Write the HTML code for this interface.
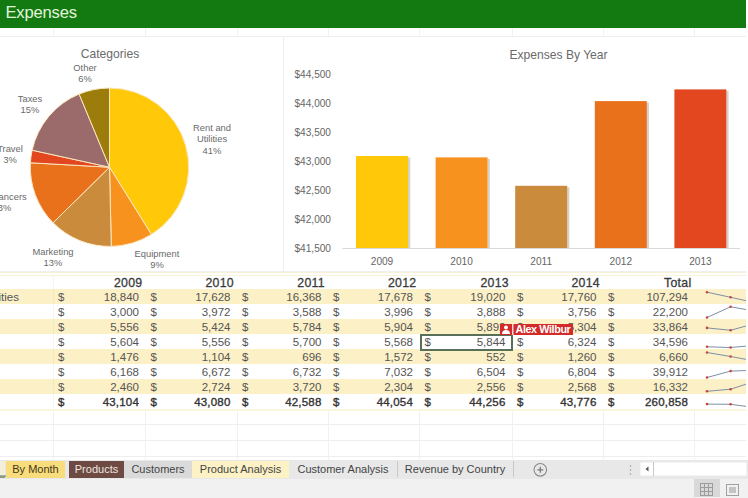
<!DOCTYPE html>
<html><head><meta charset="utf-8">
<style>
*{margin:0;padding:0;box-sizing:border-box}
html,body{width:748px;height:498px;overflow:hidden;background:#fff;font-family:"Liberation Sans",sans-serif}
#root{position:absolute;left:0;top:0;width:748px;height:498px;overflow:hidden}
#hdr{position:absolute;left:0;top:0;width:746px;height:27.5px;background:#127a10}
#hdr span{position:absolute;left:5.5px;top:2.8px;font-size:16.6px;color:#e2f4dc;letter-spacing:-0.2px}
.vl{position:absolute;top:27px;height:433px;width:1px;background:#f1f1f1}
.hl{position:absolute;left:0;width:746px;height:1px;background:#eeeeee}
#pie{position:absolute;left:-2px;top:37px;width:285.5px;height:235px;background:#fff;border-right:1.5px solid #eeeeee;border-bottom:1px solid #efefef}
#bar{position:absolute;left:283.5px;top:37px;width:462.5px;height:235px;background:#fff;border-bottom:1px solid #efefef}
svg text{font-family:"Liberation Sans",sans-serif}
.lb{font-size:9.4px;fill:#6a6a6a}
.ttl{font-size:12.1px;fill:#6a6a6a}
.ax{font-size:10.1px;fill:#666}
.band{position:absolute;left:0;width:746px;height:4px;background:#fbf5dc}
.rb{position:absolute;left:0;width:746px;background:#fcf0c6}
.hd{position:absolute;height:14px;line-height:14px;margin-top:0.5px;font-size:12.3px;font-weight:normal;-webkit-text-stroke:0.3px #3a3a3a;color:#3a3a3a;text-align:right;letter-spacing:0.3px}
.ct{position:absolute;left:-68px;width:110px;height:15px;line-height:15px;margin-top:1.5px;font-size:11.5px;color:#555;white-space:nowrap}
.dl{position:absolute;height:15px;line-height:15px;margin-top:1.5px;font-size:11.5px;color:#555}
.nm{position:absolute;height:15px;line-height:15px;margin-top:1.5px;font-size:11.5px;color:#555;text-align:right}
.b{font-weight:normal;-webkit-text-stroke:0.35px #333;color:#333;letter-spacing:0.2px}
#tabs{position:absolute;left:0;top:460px;width:748px;height:19px;background:#e8e8e8}
.tab{position:absolute;top:1px;height:17px;line-height:17px;font-size:11px;color:#444;text-align:center;white-space:nowrap}
#status{position:absolute;left:0;top:479px;width:748px;height:19px;background:#f1f1f1}
</style></head><body><div id="root">
<div class="vl" style="left:52.5px"></div><div class="vl" style="left:145px"></div><div class="vl" style="left:236.5px"></div><div class="vl" style="left:327.5px"></div><div class="vl" style="left:419px"></div><div class="vl" style="left:511.5px"></div><div class="vl" style="left:602.5px"></div><div class="vl" style="left:694px"></div>
<div class="hl" style="top:36px"></div>
<div class="hl" style="top:424px"></div>
<div class="hl" style="top:440px"></div>
<div class="hl" style="top:456px"></div>
<div id="hdr"><span>Expenses</span></div>
<div style="position:absolute;left:0;top:271px;width:746px;height:137.5px;background:#fff"></div>
<div class="band" style="top:272px;height:1px;background:#f8f2da"></div><div class="band" style="top:274.5px;height:1px;background:#f8f2da"></div>
<div class="band" style="top:408.5px;height:2px"></div>

<div class="rb" style="top:288.5px;height:15px"></div>
<div class="rb" style="top:318.5px;height:15px"></div>
<div class="rb" style="top:348.5px;height:15px"></div>
<div class="rb" style="top:378.5px;height:15px"></div>
<div class="hd" style="left:52.5px;top:275.5px;width:90.0px">2009</div>
<div class="hd" style="left:145px;top:275.5px;width:89.0px">2010</div>
<div class="hd" style="left:236.5px;top:275.5px;width:88.5px">2011</div>
<div class="hd" style="left:327.5px;top:275.5px;width:89.0px">2012</div>
<div class="hd" style="left:419px;top:275.5px;width:90.0px">2013</div>
<div class="hd" style="left:511.5px;top:275.5px;width:88.5px">2014</div>
<div class="hd" style="left:602.5px;top:275.5px;width:89.0px">Total</div>
<div class="ct" style="top:288.5px">Rent and Utilities</div>
<div class="dl" style="left:58.0px;top:288.5px">$</div>
<div class="nm" style="left:52.5px;top:288.5px;width:86.5px">18,840</div>
<div class="dl" style="left:150.5px;top:288.5px">$</div>
<div class="nm" style="left:145px;top:288.5px;width:85.5px">17,628</div>
<div class="dl" style="left:242.0px;top:288.5px">$</div>
<div class="nm" style="left:236.5px;top:288.5px;width:85.0px">16,368</div>
<div class="dl" style="left:333.0px;top:288.5px">$</div>
<div class="nm" style="left:327.5px;top:288.5px;width:85.5px">17,678</div>
<div class="dl" style="left:424.5px;top:288.5px">$</div>
<div class="nm" style="left:419px;top:288.5px;width:86.5px">19,020</div>
<div class="dl" style="left:517.0px;top:288.5px">$</div>
<div class="nm" style="left:511.5px;top:288.5px;width:85.0px">17,760</div>
<div class="dl" style="left:608.0px;top:288.5px">$</div>
<div class="nm" style="left:602.5px;top:288.5px;width:85.5px">107,294</div>
<div class="ct" style="top:303.5px">Equipment</div>
<div class="dl" style="left:58.0px;top:303.5px">$</div>
<div class="nm" style="left:52.5px;top:303.5px;width:86.5px">3,000</div>
<div class="dl" style="left:150.5px;top:303.5px">$</div>
<div class="nm" style="left:145px;top:303.5px;width:85.5px">3,972</div>
<div class="dl" style="left:242.0px;top:303.5px">$</div>
<div class="nm" style="left:236.5px;top:303.5px;width:85.0px">3,588</div>
<div class="dl" style="left:333.0px;top:303.5px">$</div>
<div class="nm" style="left:327.5px;top:303.5px;width:85.5px">3,996</div>
<div class="dl" style="left:424.5px;top:303.5px">$</div>
<div class="nm" style="left:419px;top:303.5px;width:86.5px">3,888</div>
<div class="dl" style="left:517.0px;top:303.5px">$</div>
<div class="nm" style="left:511.5px;top:303.5px;width:85.0px">3,756</div>
<div class="dl" style="left:608.0px;top:303.5px">$</div>
<div class="nm" style="left:602.5px;top:303.5px;width:85.5px">22,200</div>
<div class="ct" style="top:318.5px">Marketing</div>
<div class="dl" style="left:58.0px;top:318.5px">$</div>
<div class="nm" style="left:52.5px;top:318.5px;width:86.5px">5,556</div>
<div class="dl" style="left:150.5px;top:318.5px">$</div>
<div class="nm" style="left:145px;top:318.5px;width:85.5px">5,424</div>
<div class="dl" style="left:242.0px;top:318.5px">$</div>
<div class="nm" style="left:236.5px;top:318.5px;width:85.0px">5,784</div>
<div class="dl" style="left:333.0px;top:318.5px">$</div>
<div class="nm" style="left:327.5px;top:318.5px;width:85.5px">5,904</div>
<div class="dl" style="left:424.5px;top:318.5px">$</div>
<div class="nm" style="left:419px;top:318.5px;width:86.5px">5,892</div>
<div class="dl" style="left:517.0px;top:318.5px">$</div>
<div class="nm" style="left:511.5px;top:318.5px;width:85.0px">5,304</div>
<div class="dl" style="left:608.0px;top:318.5px">$</div>
<div class="nm" style="left:602.5px;top:318.5px;width:85.5px">33,864</div>
<div class="ct" style="top:333.5px">Freelancers</div>
<div class="dl" style="left:58.0px;top:333.5px">$</div>
<div class="nm" style="left:52.5px;top:333.5px;width:86.5px">5,604</div>
<div class="dl" style="left:150.5px;top:333.5px">$</div>
<div class="nm" style="left:145px;top:333.5px;width:85.5px">5,556</div>
<div class="dl" style="left:242.0px;top:333.5px">$</div>
<div class="nm" style="left:236.5px;top:333.5px;width:85.0px">5,700</div>
<div class="dl" style="left:333.0px;top:333.5px">$</div>
<div class="nm" style="left:327.5px;top:333.5px;width:85.5px">5,568</div>
<div class="dl" style="left:424.5px;top:333.5px">$</div>
<div class="nm" style="left:419px;top:333.5px;width:86.5px">5,844</div>
<div class="dl" style="left:517.0px;top:333.5px">$</div>
<div class="nm" style="left:511.5px;top:333.5px;width:85.0px">6,324</div>
<div class="dl" style="left:608.0px;top:333.5px">$</div>
<div class="nm" style="left:602.5px;top:333.5px;width:85.5px">34,596</div>
<div class="ct" style="top:348.5px">Travel</div>
<div class="dl" style="left:58.0px;top:348.5px">$</div>
<div class="nm" style="left:52.5px;top:348.5px;width:86.5px">1,476</div>
<div class="dl" style="left:150.5px;top:348.5px">$</div>
<div class="nm" style="left:145px;top:348.5px;width:85.5px">1,104</div>
<div class="dl" style="left:242.0px;top:348.5px">$</div>
<div class="nm" style="left:236.5px;top:348.5px;width:85.0px">696</div>
<div class="dl" style="left:333.0px;top:348.5px">$</div>
<div class="nm" style="left:327.5px;top:348.5px;width:85.5px">1,572</div>
<div class="dl" style="left:424.5px;top:348.5px">$</div>
<div class="nm" style="left:419px;top:348.5px;width:86.5px">552</div>
<div class="dl" style="left:517.0px;top:348.5px">$</div>
<div class="nm" style="left:511.5px;top:348.5px;width:85.0px">1,260</div>
<div class="dl" style="left:608.0px;top:348.5px">$</div>
<div class="nm" style="left:602.5px;top:348.5px;width:85.5px">6,660</div>
<div class="ct" style="top:363.5px">Taxes</div>
<div class="dl" style="left:58.0px;top:363.5px">$</div>
<div class="nm" style="left:52.5px;top:363.5px;width:86.5px">6,168</div>
<div class="dl" style="left:150.5px;top:363.5px">$</div>
<div class="nm" style="left:145px;top:363.5px;width:85.5px">6,672</div>
<div class="dl" style="left:242.0px;top:363.5px">$</div>
<div class="nm" style="left:236.5px;top:363.5px;width:85.0px">6,732</div>
<div class="dl" style="left:333.0px;top:363.5px">$</div>
<div class="nm" style="left:327.5px;top:363.5px;width:85.5px">7,032</div>
<div class="dl" style="left:424.5px;top:363.5px">$</div>
<div class="nm" style="left:419px;top:363.5px;width:86.5px">6,504</div>
<div class="dl" style="left:517.0px;top:363.5px">$</div>
<div class="nm" style="left:511.5px;top:363.5px;width:85.0px">6,804</div>
<div class="dl" style="left:608.0px;top:363.5px">$</div>
<div class="nm" style="left:602.5px;top:363.5px;width:85.5px">39,912</div>
<div class="ct" style="top:378.5px">Other</div>
<div class="dl" style="left:58.0px;top:378.5px">$</div>
<div class="nm" style="left:52.5px;top:378.5px;width:86.5px">2,460</div>
<div class="dl" style="left:150.5px;top:378.5px">$</div>
<div class="nm" style="left:145px;top:378.5px;width:85.5px">2,724</div>
<div class="dl" style="left:242.0px;top:378.5px">$</div>
<div class="nm" style="left:236.5px;top:378.5px;width:85.0px">3,720</div>
<div class="dl" style="left:333.0px;top:378.5px">$</div>
<div class="nm" style="left:327.5px;top:378.5px;width:85.5px">2,304</div>
<div class="dl" style="left:424.5px;top:378.5px">$</div>
<div class="nm" style="left:419px;top:378.5px;width:86.5px">2,556</div>
<div class="dl" style="left:517.0px;top:378.5px">$</div>
<div class="nm" style="left:511.5px;top:378.5px;width:85.0px">2,568</div>
<div class="dl" style="left:608.0px;top:378.5px">$</div>
<div class="nm" style="left:602.5px;top:378.5px;width:85.5px">16,332</div>
<div class="dl b" style="left:58.0px;top:393.5px">$</div>
<div class="nm b" style="left:52.5px;top:393.5px;width:86.5px">43,104</div>
<div class="dl b" style="left:150.5px;top:393.5px">$</div>
<div class="nm b" style="left:145px;top:393.5px;width:85.5px">43,080</div>
<div class="dl b" style="left:242.0px;top:393.5px">$</div>
<div class="nm b" style="left:236.5px;top:393.5px;width:85.0px">42,588</div>
<div class="dl b" style="left:333.0px;top:393.5px">$</div>
<div class="nm b" style="left:327.5px;top:393.5px;width:85.5px">44,054</div>
<div class="dl b" style="left:424.5px;top:393.5px">$</div>
<div class="nm b" style="left:419px;top:393.5px;width:86.5px">44,256</div>
<div class="dl b" style="left:517.0px;top:393.5px">$</div>
<div class="nm b" style="left:511.5px;top:393.5px;width:85.0px">43,776</div>
<div class="dl b" style="left:608.0px;top:393.5px">$</div>
<div class="nm b" style="left:602.5px;top:393.5px;width:85.5px">260,858</div>
<div style="position:absolute;left:52.5px;top:276px;width:1px;height:132px;background:rgba(200,200,190,0.18)"></div>
<svg style="position:absolute;left:0;top:0" width="746" height="498">
<defs><filter id="sh"><feGaussianBlur stdDeviation="1"/></filter></defs>
<path d="M707.0,292.2 L730.6,297.3 L754.2,302.5 L777.8,297.1 L801.4,291.5 L825.0,296.7" fill="none" stroke="#7d8fa6" stroke-width="1"/>
<circle cx="707.0" cy="292.2" r="1.3" fill="#c9463f"/>
<circle cx="730.6" cy="297.3" r="1.3" fill="#c9463f"/>
<circle cx="754.2" cy="302.5" r="1.3" fill="#c9463f"/>
<circle cx="777.8" cy="297.1" r="1.3" fill="#c9463f"/>
<circle cx="801.4" cy="291.5" r="1.3" fill="#c9463f"/>
<circle cx="825.0" cy="296.7" r="1.3" fill="#c9463f"/>
<path d="M707.0,317.5 L730.6,306.8 L754.2,311.0 L777.8,306.5 L801.4,307.7 L825.0,309.2" fill="none" stroke="#7d8fa6" stroke-width="1"/>
<circle cx="707.0" cy="317.5" r="1.3" fill="#c9463f"/>
<circle cx="730.6" cy="306.8" r="1.3" fill="#c9463f"/>
<circle cx="754.2" cy="311.0" r="1.3" fill="#c9463f"/>
<circle cx="777.8" cy="306.5" r="1.3" fill="#c9463f"/>
<circle cx="801.4" cy="307.7" r="1.3" fill="#c9463f"/>
<circle cx="825.0" cy="309.2" r="1.3" fill="#c9463f"/>
<path d="M707.0,327.9 L730.6,330.3 L754.2,323.7 L777.8,321.5 L801.4,321.7 L825.0,332.5" fill="none" stroke="#7d8fa6" stroke-width="1"/>
<circle cx="707.0" cy="327.9" r="1.3" fill="#c9463f"/>
<circle cx="730.6" cy="330.3" r="1.3" fill="#c9463f"/>
<circle cx="754.2" cy="323.7" r="1.3" fill="#c9463f"/>
<circle cx="777.8" cy="321.5" r="1.3" fill="#c9463f"/>
<circle cx="801.4" cy="321.7" r="1.3" fill="#c9463f"/>
<circle cx="825.0" cy="332.5" r="1.3" fill="#c9463f"/>
<path d="M707.0,346.8 L730.6,347.5 L754.2,345.4 L777.8,347.3 L801.4,343.4 L825.0,336.5" fill="none" stroke="#7d8fa6" stroke-width="1"/>
<circle cx="707.0" cy="346.8" r="1.3" fill="#c9463f"/>
<circle cx="730.6" cy="347.5" r="1.3" fill="#c9463f"/>
<circle cx="754.2" cy="345.4" r="1.3" fill="#c9463f"/>
<circle cx="777.8" cy="347.3" r="1.3" fill="#c9463f"/>
<circle cx="801.4" cy="343.4" r="1.3" fill="#c9463f"/>
<circle cx="825.0" cy="336.5" r="1.3" fill="#c9463f"/>
<path d="M707.0,352.5 L730.6,356.5 L754.2,360.9 L777.8,351.5 L801.4,362.5 L825.0,354.9" fill="none" stroke="#7d8fa6" stroke-width="1"/>
<circle cx="707.0" cy="352.5" r="1.3" fill="#c9463f"/>
<circle cx="730.6" cy="356.5" r="1.3" fill="#c9463f"/>
<circle cx="754.2" cy="360.9" r="1.3" fill="#c9463f"/>
<circle cx="777.8" cy="351.5" r="1.3" fill="#c9463f"/>
<circle cx="801.4" cy="362.5" r="1.3" fill="#c9463f"/>
<circle cx="825.0" cy="354.9" r="1.3" fill="#c9463f"/>
<path d="M707.0,377.5 L730.6,371.1 L754.2,370.3 L777.8,366.5 L801.4,373.2 L825.0,369.4" fill="none" stroke="#7d8fa6" stroke-width="1"/>
<circle cx="707.0" cy="377.5" r="1.3" fill="#c9463f"/>
<circle cx="730.6" cy="371.1" r="1.3" fill="#c9463f"/>
<circle cx="754.2" cy="370.3" r="1.3" fill="#c9463f"/>
<circle cx="777.8" cy="366.5" r="1.3" fill="#c9463f"/>
<circle cx="801.4" cy="373.2" r="1.3" fill="#c9463f"/>
<circle cx="825.0" cy="369.4" r="1.3" fill="#c9463f"/>
<path d="M707.0,391.3 L730.6,389.2 L754.2,381.5 L777.8,392.5 L801.4,390.5 L825.0,390.4" fill="none" stroke="#7d8fa6" stroke-width="1"/>
<circle cx="707.0" cy="391.3" r="1.3" fill="#c9463f"/>
<circle cx="730.6" cy="389.2" r="1.3" fill="#c9463f"/>
<circle cx="754.2" cy="381.5" r="1.3" fill="#c9463f"/>
<circle cx="777.8" cy="392.5" r="1.3" fill="#c9463f"/>
<circle cx="801.4" cy="390.5" r="1.3" fill="#c9463f"/>
<circle cx="825.0" cy="390.4" r="1.3" fill="#c9463f"/>
<path d="M707.0,404.1 L730.6,404.3 L754.2,407.5 L777.8,397.8 L801.4,396.5 L825.0,399.7" fill="none" stroke="#7d8fa6" stroke-width="1"/>
<circle cx="707.0" cy="404.1" r="1.3" fill="#c9463f"/>
<circle cx="730.6" cy="404.3" r="1.3" fill="#c9463f"/>
<circle cx="754.2" cy="407.5" r="1.3" fill="#c9463f"/>
<circle cx="777.8" cy="397.8" r="1.3" fill="#c9463f"/>
<circle cx="801.4" cy="396.5" r="1.3" fill="#c9463f"/>
<circle cx="825.0" cy="399.7" r="1.3" fill="#c9463f"/>
</svg>
<div id="pie"></div>
<div id="bar"></div>
<svg style="position:absolute;left:0;top:0" width="748" height="498">
<defs><filter id="sh2"><feGaussianBlur stdDeviation="1"/></filter></defs>
<text x="110" y="57.6" text-anchor="middle" class="ttl">Categories</text>
<path d="M109.5,167.2 L109.50,88.00 A79.2,79.2 0 0 1 151.38,234.42 Z" fill="#FFC90A" stroke="#fce8c0" stroke-width="1" stroke-linejoin="round"/>
<path d="M109.5,167.2 L151.38,234.42 A79.2,79.2 0 0 1 111.28,246.38 Z" fill="#F7921E" stroke="#fce8c0" stroke-width="1" stroke-linejoin="round"/>
<path d="M109.5,167.2 L111.28,246.38 A79.2,79.2 0 0 1 53.06,222.77 Z" fill="#CB8B3C" stroke="#fce8c0" stroke-width="1" stroke-linejoin="round"/>
<path d="M109.5,167.2 L53.06,222.77 A79.2,79.2 0 0 1 30.42,162.79 Z" fill="#E9711B" stroke="#fce8c0" stroke-width="1" stroke-linejoin="round"/>
<path d="M109.5,167.2 L30.42,162.79 A79.2,79.2 0 0 1 32.14,150.22 Z" fill="#E2471F" stroke="#fce8c0" stroke-width="1" stroke-linejoin="round"/>
<path d="M109.5,167.2 L32.14,150.22 A79.2,79.2 0 0 1 79.14,94.05 Z" fill="#9B6A6A" stroke="#fce8c0" stroke-width="1" stroke-linejoin="round"/>
<path d="M109.5,167.2 L79.14,94.05 A79.2,79.2 0 0 1 109.50,88.00 Z" fill="#9C7D0C" stroke="#fce8c0" stroke-width="1" stroke-linejoin="round"/>
<text class="lb" text-anchor="middle"><tspan x="85" y="71">Other</tspan><tspan x="85" y="82">6%</tspan></text>
<text class="lb" text-anchor="middle"><tspan x="30" y="102">Taxes</tspan><tspan x="30" y="113">15%</tspan></text>
<text class="lb" text-anchor="middle"><tspan x="10" y="152">Travel</tspan><tspan x="10" y="163">3%</tspan></text>
<text class="lb" text-anchor="middle"><tspan x="2" y="200">Freelancers</tspan><tspan x="2" y="211">13%</tspan></text>
<text class="lb" text-anchor="middle"><tspan x="53" y="255">Marketing</tspan><tspan x="53" y="266">13%</tspan></text>
<text class="lb" text-anchor="middle"><tspan x="157" y="257">Equipment</tspan><tspan x="157" y="268">9%</tspan></text>
<text class="lb" text-anchor="middle"><tspan x="212" y="131">Rent and</tspan><tspan x="212" y="142">Utilities</tspan><tspan x="212" y="154">41%</tspan></text>
<text x="558.5" y="58.6" text-anchor="middle" class="ttl">Expenses By Year</text>
<line x1="342.5" y1="248.5" x2="740" y2="248.5" stroke="#d9d9d9" stroke-width="1"/>
<rect x="408.0" y="157.5" width="2.2" height="90.5" fill="#8a7a60" opacity="0.35"/>
<rect x="356.0" y="156.0" width="52" height="92.0" fill="#FFC90A"/>
<text x="382.0" y="264.5" text-anchor="middle" class="ax">2009</text>
<rect x="487.6" y="158.9" width="2.2" height="89.1" fill="#8a7a60" opacity="0.35"/>
<rect x="435.6" y="157.4" width="52" height="90.6" fill="#F7921E"/>
<text x="461.6" y="264.5" text-anchor="middle" class="ax">2010</text>
<rect x="567.2" y="187.3" width="2.2" height="60.7" fill="#8a7a60" opacity="0.35"/>
<rect x="515.2" y="185.8" width="52" height="62.2" fill="#CB8B3C"/>
<text x="541.2" y="264.5" text-anchor="middle" class="ax">2011</text>
<rect x="646.8" y="102.6" width="2.2" height="145.4" fill="#8a7a60" opacity="0.35"/>
<rect x="594.8" y="101.1" width="52" height="146.9" fill="#E9711B"/>
<text x="620.8" y="264.5" text-anchor="middle" class="ax">2012</text>
<rect x="726.4" y="90.9" width="2.2" height="157.1" fill="#8a7a60" opacity="0.35"/>
<rect x="674.4" y="89.4" width="52" height="158.6" fill="#E2471F"/>
<text x="700.4" y="264.5" text-anchor="middle" class="ax">2013</text>
<text x="331" y="251.5" text-anchor="end" class="ax">$41,500</text>
<text x="331" y="222.6" text-anchor="end" class="ax">$42,000</text>
<text x="331" y="193.7" text-anchor="end" class="ax">$42,500</text>
<text x="331" y="164.8" text-anchor="end" class="ax">$43,000</text>
<text x="331" y="135.9" text-anchor="end" class="ax">$43,500</text>
<text x="331" y="107.0" text-anchor="end" class="ax">$44,000</text>
<text x="331" y="78.1" text-anchor="end" class="ax">$44,500</text>
</svg>
<div id="tabs">
<div class="tab" style="left:0;width:5px;background:#f6efd8;border-bottom:2px solid #8c9a8c"></div>
<div class="tab" style="left:6px;width:59px;background:#f9dd7c;color:#44391a">By Month</div>
<div class="tab" style="left:69px;width:55px;background:#6d4a42;color:#f0e6e0">Products</div>
<div class="tab" style="left:124px;width:68px;background:#dadada">Customers</div>
<div class="tab" style="left:192px;width:97px;background:#fcf2c6">Product Analysis</div>
<div class="tab" style="left:289px;width:108px">Customer Analysis</div>
<div class="tab" style="left:397px;width:116px">Revenue by Country</div>
</div>
<div id="status"></div>
<div style="position:absolute;left:397px;top:461px;width:1px;height:16px;background:#c8c8c8"></div>
<div style="position:absolute;left:512.5px;top:461px;width:1px;height:16px;background:#c8c8c8"></div>
<svg style="position:absolute;left:0;top:455px" width="748" height="43">
<circle cx="540.3" cy="14.8" r="6.3" fill="none" stroke="#8a8a8a" stroke-width="1.1"/>
<path d="M537.3,14.8 H543.3 M540.3,11.8 V17.8" stroke="#7a7a7a" stroke-width="1.3"/>
<circle cx="630.5" cy="11" r="0.8" fill="#999"/><circle cx="630.5" cy="15" r="0.8" fill="#999"/><circle cx="630.5" cy="19" r="0.8" fill="#999"/>
<rect x="640.5" y="7.5" width="106" height="13" fill="#fff"/>
<line x1="653.5" y1="7" x2="653.5" y2="21" stroke="#c8c8c8" stroke-width="1"/>
<path d="M648.5,11.5 L645.5,14 L648.5,16.5 Z" fill="#555"/>
<rect x="694" y="24" width="26" height="18" fill="#d9d9d9"/>
<g stroke="#9c9c9c" stroke-width="1" fill="none">
<rect x="700.5" y="28.5" width="12" height="12"/>
<path d="M704.5,28.5 V40.5 M708.5,28.5 V40.5 M700.5,32.5 H712.5 M700.5,36.5 H712.5"/>
<rect x="726.5" y="29.5" width="12" height="11" stroke="#a0a0a0"/>
<rect x="729" y="32" width="7" height="6" fill="#c4c4c4" stroke="none"/>
</g>
<path d="M0,21 H6" stroke="#8a9a8a" stroke-width="1.5"/>
</svg>
<div style="position:absolute;left:419.5px;top:333.5px;width:93.5px;height:17.8px;border:2px solid #587058"></div>
<div style="position:absolute;left:499.5px;top:323.5px;width:73.5px;height:11px;background:#d42a2a"></div>
<svg style="position:absolute;left:499.5px;top:323.5px" width="14" height="11">
<circle cx="6" cy="3.6" r="2" fill="#fff"/>
<path d="M2,10 Q2,6 6,6 Q10,6 10,10 Z" fill="#fff"/>
<rect x="12" y="0" width="1.5" height="11" fill="#f6d8d8"/>
</svg>
<div style="position:absolute;left:515.5px;top:322.5px;font-size:10.8px;line-height:13px;font-weight:bold;color:#fff;letter-spacing:-0.4px;white-space:nowrap">Alex Wilbur</div>
</div>
</body></html>
